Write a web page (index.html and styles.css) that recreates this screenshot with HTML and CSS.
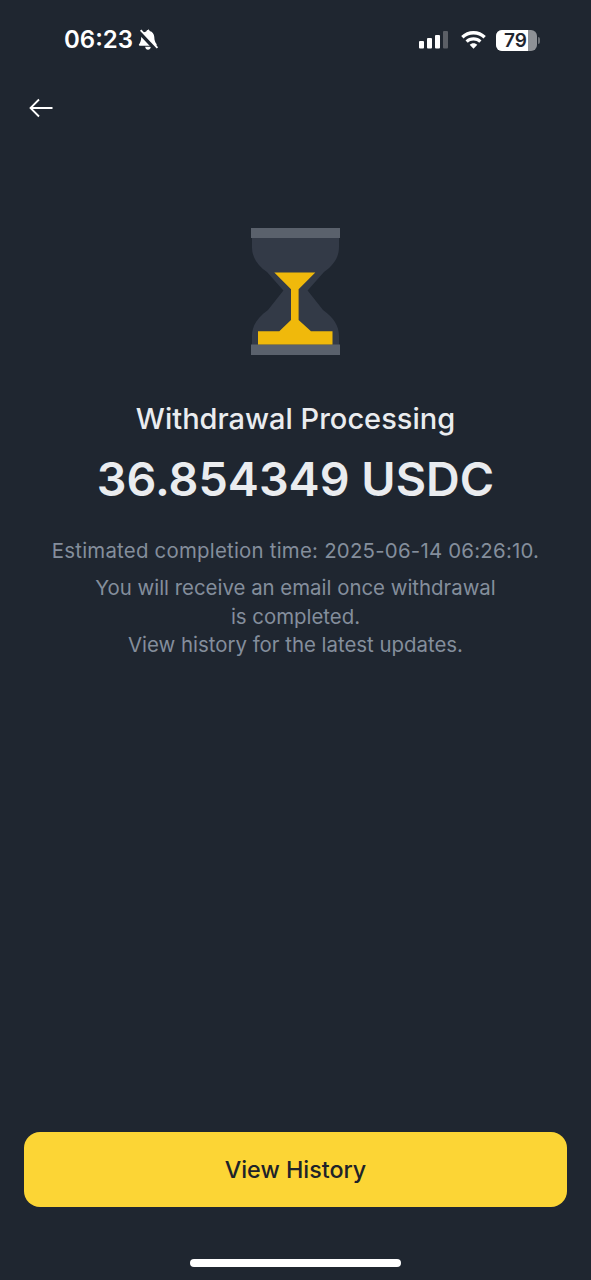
FILE: index.html
```html
<!DOCTYPE html>
<html lang="en">
<head>
<meta charset="utf-8">
<title>Withdrawal Processing</title>
<link rel="stylesheet" href="styles.css">
</head>
<body>
<div class="screen">
  <div class="status">
    <div class="status-left">
      <span class="time">06:23</span>
      <svg class="bell" width="22" height="24" viewBox="0 0 21 22">
        <path d="M10.5 1c.9 0 1.500.6 1.600 1.400 2.700.7 4.300 3 4.400 5.800.1 3 .7 5 2.300 6.800l-.2 1.500H3.300c-.9 0-1.500-.3-1.600-.9 1.500-1.800 2.200-3.900 2.300-6.900.1-2.900 1.700-5.100 4.800-5.800.1-.8.8-1.400 1.700-1.400zM7.800 17.500h5.400c-.2 1.700-1.300 2.900-2.700 2.900s-2.500-1.200-2.700-2.900z" fill="#fff"/>
        <path d="M2 3l16 17" stroke="#1f2630" stroke-width="4"/>
        <path d="M3.500 1.500l16 17" stroke="#fff" stroke-width="1.800"/>
      </svg>
    </div>
    <div class="status-right">
      <svg class="signal" width="30" height="18" viewBox="0 0 30 18">
        <rect x="0" y="10" width="5" height="7.500" rx="1" fill="#fff"/>
        <rect x="8" y="7" width="5" height="10.500" rx="1" fill="#fff"/>
        <rect x="16" y="4" width="5" height="13.500" rx="1" fill="#fff"/>
        <rect x="24" y="0" width="5" height="17.500" rx="1" fill="#5b5f66"/>
      </svg>
      <svg class="wifi" width="27" height="20" viewBox="0 0 27 20">
        <path d="M13.500 1C18.300 1 22.600 2.900 25.800 6l-2.300 2.400C20.900 5.900 17.400 4.400 13.500 4.400S6.100 5.900 3.500 8.400L1.200 6C4.400 2.900 8.700 1 13.500 1z" fill="#fff"/>
        <path d="M13.500 7.200c3.100 0 5.900 1.200 8 3.200l-2.300 2.400c-1.500-1.400-3.500-2.300-5.700-2.300s-4.200.9-5.700 2.300l-2.300-2.400c2.100-2 4.900-3.200 8-3.200z" fill="#fff"/>
        <path d="M13.500 13.300c1.500 0 2.800.6 3.800 1.500l-3.800 4-3.800-4c1-.9 2.300-1.500 3.800-1.500z" fill="#fff"/>
      </svg>
      <div class="battery">
        <div class="battery-body"><span class="battery-level">79</span><span class="battery-rest"></span></div>
        <span class="battery-cap"></span>
      </div>
    </div>
  </div>

  <div class="nav">
    <svg width="26" height="20" viewBox="0 0 26 20">
      <path d="M24.500 10H2.500M11 1.500L2.500 10l8.500 8.500" fill="none" stroke="#fff" stroke-width="1.800"/>
    </svg>
  </div>

  <main class="content">
    <svg class="glass" width="89" height="127" viewBox="0 0 89 127">
      <path d="M1 10H88V19C88 29 83 37 73 44L56.600 62.500 72 82C83 90 88 98 88 108V117H1V108C1 98 6 90 17 82L32.400 62.500 16 44C6 37 1 29 1 19z" fill="#333a47"/>
      <rect x="0" y="0" width="89" height="10" fill="#5a616c"/>
      <rect x="0" y="116.500" width="89" height="10.500" fill="#5a616c"/>
      <path d="M23.300 44.600H64.300L47.600 61.300V92L60 103.300H81.500V116.600H7V103.300H28.300L40 92V61.300z" fill="#f0b90b"/>
    </svg>
    <h1 class="title">Withdrawal Processing</h1>
    <p class="amount">36.854349 USDC</p>
    <p class="eta">Estimated completion time: 2025-06-14 06:26:10.</p>
    <p class="note">You will receive an email once withdrawal<br>is completed.<br>View history for the latest updates.</p>
  </main>

  <div class="footer">
    <button class="cta" type="button">View History</button>
    <div class="home-bar"></div>
  </div>
</div>
</body>
</html>
```
FILE: styles.css
```css
* { box-sizing: border-box; }
html, body { margin: 0; padding: 0; }
body { background: #1f2630; font-family: "Inter", "Liberation Sans", sans-serif; }
.screen { width: 591px; height: 1280px; display: flex; flex-direction: column; background: #1f2630; color: #eaecef; overflow: hidden; }

.status { height: 80px; flex: none; padding: 27px 51px 0 64px; display: flex; justify-content: space-between; align-items: flex-start; color: #fff; }
.status-left { display: flex; align-items: center; gap: 4px; height: 26px; }
.time { font-size: 24px; font-weight: 600; line-height: 26px; }
.status-right { display: flex; align-items: center; height: 26px; }
.signal { margin-right: 11px; }
.wifi { margin-right: 9px; }
.battery { display: flex; align-items: center; gap: 1px; }
.battery-body { width: 41px; height: 21px; border-radius: 6px; overflow: hidden; display: flex; background: #8e9196; }
.battery-level { flex: 1; padding-left: 7px; background: #fff; color: #1f2630; font-size: 19px; font-weight: 600; line-height: 21px; text-align: center; }
.battery-rest { width: 9px; }
.battery-cap { width: 2px; height: 7px; background: #6b6f75; border-radius: 0 2px 2px 0; }

.nav { height: 54px; flex: none; padding: 18px 0 0 28px; }
.nav svg { display: block; }

.content { flex: 1; display: flex; flex-direction: column; align-items: center; padding-top: 94px; }
.glass { display: block; }
.title { margin: 46px 0 0; font-size: 29px; line-height: 36px; font-weight: 500; color: #eaecef; }
.amount { margin: 14px 0 0; font-size: 46.700px; line-height: 56px; font-weight: 600; color: #eaecef; }
.eta { margin: 30px 0 0; font-size: 20.400px; line-height: 28px; letter-spacing: .23px; color: #848e9c; }
.note { margin: 9px 0 0; font-size: 20.400px; line-height: 28.500px; color: #848e9c; text-align: center; }

.footer { flex: none; padding: 0 24px; display: flex; flex-direction: column; align-items: center; }
.cta { width: 100%; height: 75px; border: 0; border-radius: 16px; background: #fcd535; color: #1e2329; font-family: inherit; font-size: 23.300px; font-weight: 500; }
.home-bar { width: 211px; height: 8px; margin: 52px 0 13px; border-radius: 4px; background: #fff; }
```
